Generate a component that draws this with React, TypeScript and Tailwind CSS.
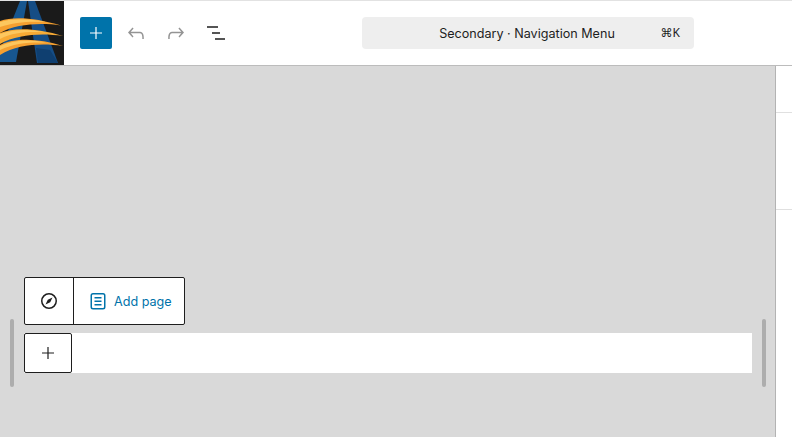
function Logo() {
  return (
    <svg width="64" height="64" viewBox="0 0 64 64" className="shrink-0 bg-[#1a1a1a]">
      {/* blue A */}
      <path d="M20 0H27L16 61H0V50Z" fill="#17568f" />
      <path d="M28 0H35L58 62H37Z" fill="#154d85" />
      <path d="M36 47L50 49L58 62H38Z" fill="#0f3f70" />
      {/* orange swooshes */}
      <path d="M0 20C14 15 36 17 61 24.5C40 21.5 16 23 0 32Z" fill="#f5a030" />
      <path d="M0 32C14 26 38 27 63 35C42 32 18 33 0 43Z" fill="#f7aa35" />
      <path d="M0 44C14 37 38 37 63 45C42 42 18 43 0 54Z" fill="#f5a030" />
      <path d="M0 21C14 17 30 18 46 21C30 20 14 21 0 26Z" fill="#fcc75f" />
      <path d="M0 33C14 28 30 28 46 31.5C30 30.5 14 31 0 38Z" fill="#fcc75f" />
      <path d="M0 45C14 39 30 38 46 41.5C30 41 14 42 0 49Z" fill="#fcc75f" />
    </svg>
  );
}

function PlusIcon() {
  return (
    <svg width="24" height="24" viewBox="0 0 24 24" fill="currentColor">
      <path d="M11.4 12.6V18h1.2v-5.4H18v-1.2h-5.4V6h-1.2v5.4H6v1.2h5.4Z" />
    </svg>
  );
}

function UndoIcon() {
  return (
    <svg width="24" height="24" viewBox="0 0 24 24" fill="currentColor">
      <path d="M18.3 11.7c-.6-.6-1.4-.9-2.3-.9H6.7l2.9-3.3-1.1-1-4.5 5L8.5 16.5l1-1-2.7-3.2H16c.5 0 .9.2 1.3.5 1 1 1 3.4 1 4.5v.7h1.5v-.7c0-1.4 0-4.2-1.5-5.6Z" />
    </svg>
  );
}

function ListView() {
  return (
    <svg width="24" height="24" viewBox="0 0 24 24" fill="#1e1e1e">
      <path d="M3 5.25h11v1.5H3zM8 11.25h8v1.5H8zM11 17.25h10v1.5H11z" />
    </svg>
  );
}

function Compass() {
  return (
    <svg width="24" height="24" viewBox="0 0 24 24" fill="none">
      <circle cx="12" cy="12" r="7.25" stroke="#1e1e1e" strokeWidth="1.5" />
      <path d="M15.5 8.5L13.2 13.2L8.5 15.5L10.8 10.8Z" fill="#1e1e1e" />
    </svg>
  );
}

function PageIcon() {
  return (
    <svg width="24" height="24" viewBox="0 0 24 24" fill="none" stroke="#0073aa" strokeWidth="1.5">
      <rect x="5.25" y="4.75" width="13.5" height="15" rx="1.75" />
      <path d="M8.5 8.75h7M8.5 12.25h7M8.5 15.75h7" />
    </svg>
  );
}

export default function App() {
  return (
    <div className="h-[437px] w-[792px] flex flex-col overflow-hidden bg-white font-['Inter','Liberation_Sans',sans-serif]">
      {/* Top bar */}
      <header className="h-[66px] shrink-0 flex items-center border-t border-b border-t-[#e2e2e2] border-b-[#bcbcbc] bg-white">
        <Logo />
        <div className="flex items-center ml-4">
          <button className="w-8 h-8 rounded-[2px] bg-[#0073aa] flex items-center justify-center text-white">
            <PlusIcon />
          </button>
          <div className="w-10 h-8 ml-1 flex items-center justify-center text-[#949494]">
            <UndoIcon />
          </div>
          <div className="w-10 h-8 flex items-center justify-center text-[#949494]">
            <span className="-scale-x-100 flex">
              <UndoIcon />
            </span>
          </div>
          <div className="w-10 h-8 flex items-center justify-center">
            <ListView />
          </div>
        </div>
        <div className="relative ml-[126px] w-[332px] h-8 rounded-[4px] bg-[#eeeeee] flex items-center justify-center text-[12.6px] text-[#1e1e1e] pt-[2px]">
          <span className="-ml-[2px]">Secondary · Navigation Menu</span>
          <span className="absolute right-[14px] top-[7px] text-[12px] font-['Noto_Sans','DejaVu_Sans',sans-serif]">⌘K</span>
        </div>
      </header>

      <div className="flex-1 flex min-h-0">
        {/* Canvas */}
        <main className="relative w-[776px] border-r border-[#b3b3b3] bg-[#d9d9d9] flex flex-col justify-end pl-6 pr-[23px] pb-16">
          <div className="flex w-[161px] h-12 mb-2 rounded-[2px] border border-[#1e1e1e] bg-white">
            <div className="w-[49px] shrink-0 border-r border-[#1e1e1e] flex items-center justify-center">
              <Compass />
            </div>
            <div className="flex-1 flex items-center pl-[12px] gap-[4px] text-[12.6px] text-[#0073aa]">
              <PageIcon />
              <span className="pt-[2px]">Add page</span>
            </div>
          </div>
          <div className="h-10 bg-white flex">
            <div className="w-12 h-10 rounded-[2px] border border-[#1e1e1e] bg-white flex items-center justify-center text-[#1e1e1e]">
              <PlusIcon />
            </div>
          </div>
          {/* resize handles */}
          <div className="absolute left-[10px] top-[253px] w-1 h-[68px] rounded-[2px] bg-[#adadad]" />
          <div className="absolute left-[762px] top-[253px] w-1 h-[68px] rounded-[2px] bg-[#adadad]" />
        </main>

        {/* Sidebar edge */}
        <aside className="flex-1 bg-white">
          <div className="h-[47px] border-b border-[#e0e0e0]" />
          <div className="h-[97px] border-b border-[#e0e0e0]" />
        </aside>
      </div>
    </div>
  );
}
